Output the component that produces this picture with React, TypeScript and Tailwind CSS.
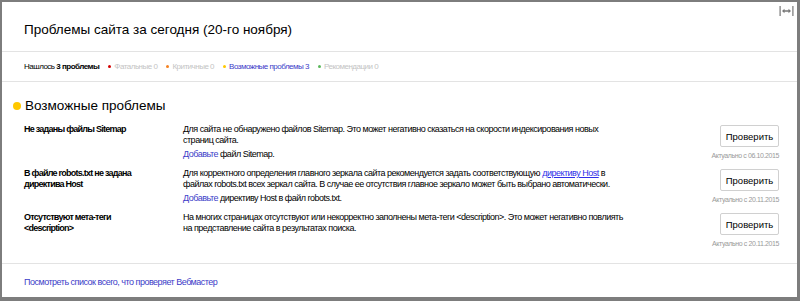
const stats = [
  { label: 'Фатальные', count: 0, dot: 'bg-[#d40000]', text: 'text-[#c4c4c4]' },
  { label: 'Критичные', count: 0, dot: 'bg-[#f58220]', text: 'text-[#c4c4c4]' },
  { label: 'Возможные проблемы', count: 3, dot: 'bg-[#ffc800]', text: 'text-[#3c3cc8]' },
  { label: 'Рекомендации', count: 0, dot: 'bg-[#5cb85c]', text: 'text-[#c4c4c4]' },
]

const problems = [
  {
    title: ['Не заданы файлы Sitemap'],
    text: [
      'Для сайта не обнаружено файлов Sitemap. Это может негативно сказаться на скорости индексирования новых',
      'страниц сайта.',
    ],
    action: 'файл Sitemap.',
    date: '06.10.2015',
  },
  {
    title: ['В файле robots.txt не задана', 'директива Host'],
    text: null,
    action: 'директиву Host в файл robots.txt.',
    date: '20.11.2015',
  },
  {
    title: ['Отсутствуют мета-теги', '<description>'],
    text: [
      'На многих страницах отсутствуют или некорректно заполнены мета-теги <description>. Это может негативно повлиять',
      'на представление сайта в результатах поиска.',
    ],
    action: null,
    date: '20.11.2015',
  },
]

function WidthIcon() {
  return (
    <svg width="15" height="10" viewBox="0 0 15 10" className="text-[#777]">
      <rect x="0.5" y="0" width="1.2" height="10" fill="currentColor" />
      <rect x="13.3" y="0" width="1.2" height="10" fill="currentColor" />
      <path d="M3 5 L5.5 2.8 L5.5 4.3 L9.5 4.3 L9.5 2.8 L12 5 L9.5 7.2 L9.5 5.7 L5.5 5.7 L5.5 7.2 Z" fill="currentColor" />
    </svg>
  )
}

export default function App() {
  return (
    <div
      className="h-[301px] w-[800px] overflow-hidden border-t-2 border-l-2 border-r-[3px] border-b-[4px] border-[#7d7d7d] bg-white text-black"
      style={{ fontFamily: '"Liberation Sans", Arial, sans-serif' }}
    >
      <div className="relative">
        <div className="absolute right-[3px] top-[4px]">
          <WidthIcon />
        </div>
        <h1 className="pl-[22px] pt-[18px] pb-[11px] text-[13.5px] leading-[20px]">
          Проблемы сайта за сегодня (20-го ноября)
        </h1>
      </div>
      <div className="h-px bg-[#e3e3e3]" />

      {/* сводка */}
      <div className="flex items-center gap-[8px] pl-[22px] h-[29px] text-[8px] tracking-[-0.5px]">
        <span>
          Нашлось <b>3 проблемы</b>
        </span>
        {stats.map((s) => (
          <span key={s.label} className="flex items-center gap-[3px] ml-px">
            <span className={`inline-block h-[3px] w-[3px] rounded-full ${s.dot}`} />
            <span className={s.text}>
              {s.label} {s.count}
            </span>
          </span>
        ))}
      </div>
      <div className="h-px bg-[#e3e3e3]" />

      <div className="flex items-center pl-[11px] pt-[5px] h-[42px]">
        <span className="inline-block h-[8px] w-[8px] rounded-full bg-[#ffc800] mr-[4px]" />
        <h2 className="text-[13.5px] leading-[20px]">Возможные проблемы</h2>
      </div>

      {/* список проблем */}
      <div className="flex flex-col gap-[7px] pl-[22px] pr-[18px] text-[9px] leading-[11px] tracking-[-0.5px]">
        {problems.map((p, i) => (
          <div key={i} className="flex">
            <div className="w-[159px] font-bold tracking-[-0.75px]">
              {p.title.map((t) => (
                <div key={t}>{t}</div>
              ))}
            </div>
            <div className="flex-1">
              {p.text ? (
                p.text.map((t) => <div key={t}>{t}</div>)
              ) : (
                <>
                  <div>
                    Для корректного определения главного зеркала сайта рекомендуется задать соответствующую{' '}
                    <a className="text-[#2f2fe8] underline">директиву Host</a> в
                  </div>
                  <div>
                    файлах robots.txt всех зеркал сайта. В случае ее отсутствия главное зеркало может быть выбрано автоматически.
                  </div>
                </>
              )}
              {p.action && (
                <div className="mt-[3px]">
                  <a className="text-[#3c3cc8]">Добавьте</a> {p.action}
                </div>
              )}
            </div>
            <div className="flex flex-col items-end">
              <button className="mt-px h-[22px] w-[59px] rounded-[2px] border border-[#d0d0d0] bg-white text-[9.5px] tracking-normal">
                Проверить
              </button>
              <div className="mt-[4px] text-[7px] leading-[10px] tracking-[-0.4px] text-[#9a9a9a]">
                Актуально с {p.date}
              </div>
            </div>
          </div>
        ))}
      </div>

      <div className="mt-[14px] h-px bg-[#e3e3e3]" />
      <div className="pl-[22px] pt-[13px] text-[9px] leading-[11px] tracking-[-0.5px]">
        <a className="text-[#3c3cc8]">Посмотреть список всего, что проверяет Вебмастер</a>
      </div>
    </div>
  )
}
